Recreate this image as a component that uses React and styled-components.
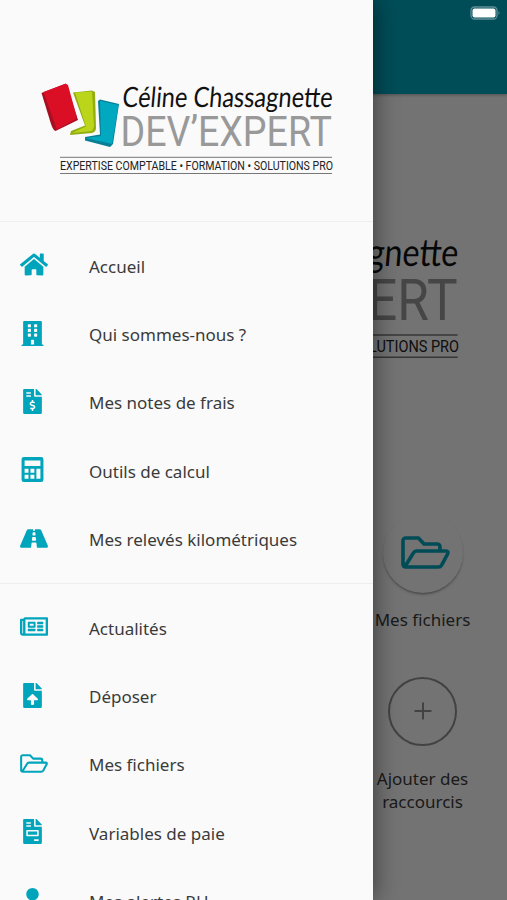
import styled, { createGlobalStyle } from 'styled-components';
import {
  FaHome,
  FaBuilding,
  FaFileInvoiceDollar,
  FaRoad,
  FaRegNewspaper,
  FaFileUpload,
  FaFileInvoice,
  FaUser,
} from 'react-icons/fa';

const GlobalStyle = createGlobalStyle`
  * {
    box-sizing: border-box;
  }
  body {
    margin: 0;
    font-family: 'Noto Sans', 'Open Sans', sans-serif;
    color: #3a3a3a;
  }
`;

const Screen = styled.div`
  position: relative;
  width: 507px;
  height: 900px;
  overflow: hidden;
  background: #fafafa;
`;

const Header = styled.header`
  height: 94px;
  background: #00a9c0;
  box-shadow: 0 1px 3px rgba(0, 0, 0, 0.3);
`;

const Home = styled.main`
  display: flex;
  flex-direction: column;
`;

const HomeLogo = styled.div`
  display: flex;
  padding: 138px 0 0 58px;
`;

const Shortcuts = styled.div`
  display: grid;
  grid-template-columns: repeat(3, 1fr);
  padding-top: 152px;
`;

const Shortcut = styled.div`
  grid-column: 3;
  display: flex;
  flex-direction: column;
  align-items: center;
  height: 159px;
`;

const Bubble = styled.div`
  display: flex;
  align-items: center;
  justify-content: center;
  width: 80px;
  height: 80px;
  border-radius: 50%;
  color: #00a5bb;
  background: #fafafa;
  box-shadow: 0 2px 3px -1px rgba(0, 0, 0, 0.5);

  svg {
    flex: none;
  }
`;

const FolderBubble = styled(Bubble)`
  padding-left: 5px;
`;

const AddBubble = styled(Bubble)`
  width: 69px;
  height: 69px;
  margin: 5px 0 6px;
  color: #919191;
  background: none;
  border: 2.5px solid #919191;
  box-shadow: none;
`;

const ShortcutLabel = styled.div`
  width: 110px;
  margin-top: 15px;
  font-size: 17px;
  line-height: 23px;
  text-align: center;
`;

const Backdrop = styled.div`
  position: absolute;
  inset: 0;
  background: rgba(0, 0, 0, 0.54);
`;

const Battery = styled.svg`
  position: absolute;
  top: 6px;
  right: 6px;
`;

const Drawer = styled.nav`
  position: absolute;
  top: 0;
  left: 0;
  width: 372.5px;
  height: 900px;
  overflow: hidden;
  background: #fafafa;
  box-shadow: 2px 0 22px rgba(0, 0, 0, 0.45);
`;

const DrawerHead = styled.div`
  height: 222px;
  padding: 82px 0 0 40px;
  border-bottom: 1px solid #eeeeee;
`;

const Section = styled.ul`
  margin: 0;
  padding: 10px 0 9px;
  list-style: none;
  border-bottom: 1px solid #eeeeee;
`;

const Item = styled.li`
  display: flex;
  align-items: center;
  height: 68.4px;
  padding-left: 20.3px;
  font-size: 17px;
`;

const ItemIcon = styled.span`
  display: flex;
  align-items: center;
  justify-content: ${({ $wide }) => ($wide ? 'flex-start' : 'center')};
  width: 24px;
  height: 25px;
  margin: 0 44.7px 3px 0;
  font-size: 25px;
  color: #00a5bb;

  svg {
    flex: none;
    width: ${({ $wide }) => ($wide ? '28px' : '25px')};
    height: 25px;
  }
`;

const Calculator = () => (
  <svg viewBox="0 0 448 512" fill="currentColor">
    <path
      fillRule="evenodd"
      d="M48 0h352q48 0 48 48v416q0 48-48 48H48q-48 0-48-48V48Q0 0 48 0zM62 72v112h324V72zM62 242v80h80v-80zM182 242v80h80v-80zM62 366v80h80v-80zM182 366v80h80v-80zM304 242v204h82V242z"
    />
  </svg>
);

const FolderOpen = ({ width }) => (
  <svg
    width={width}
    viewBox="0 0 49 33"
    fill="none"
    stroke="currentColor"
    strokeWidth="3.6"
    strokeLinecap="round"
    strokeLinejoin="round"
  >
    <path d="M39 14.500V11Q39 8 36 8H23L17.500 2H5Q2 2 2 5V28Q2 31 5 31H37.500Q39.500 31 40.500 29.300L46.600 18Q47.800 15 45 15H15.500Q13.500 15 12.500 16.800L4 30.500" />
  </svg>
);

const Logo = ({ width }) => (
  <svg width={width} viewBox="0 0 293 94" style={{ display: 'block' }}>
    <path d="M1.500 11L26 1.500 38 38 15.500 49Q13 48 11 42z" fill="#a80f22" transform="translate(0 0)" />
    <path d="M3.500 10L25.500 1.800 28 3 36.500 34 36 37 17 47.500z" fill="#da0f25" />
    <path d="M33 10.500L52 8.500 55 10 56 46Q56 50 52 51L30 53 31 49 45 43.500z" fill="#93ad12" />
    <path d="M35 10.500L52 9.500 54 44.500 52 49 32 51 46 44.500z" fill="#bbd51b" />
    <path d="M58 19L60 17.500 79 22 73 62 70 65 45 58.500 45 55 60 52.500z" fill="#087f95" />
    <path d="M60 19L78.500 23 72 62 46 56 61 54z" fill="#00a9c0" />
    <text
      x="84"
      y="24.500"
      textLength="210"
      lengthAdjust="spacingAndGlyphs"
      fontFamily="Lato"
      fontSize="28"
      fill="#111"
      transform="skewX(-5)"
    >
      Céline Chassagnette
    </text>
    <text
      x="80.500"
      y="64.300"
      textLength="211.500"
      lengthAdjust="spacingAndGlyphs"
      fontFamily="Roboto"
      fontSize="42.500"
      fill="#999"
    >
      DEV’EXPERT
    </text>
    <path d="M20 75.300H292M20 91.500H292" stroke="#777" />
    <text
      x="20"
      y="87.600"
      textLength="273"
      lengthAdjust="spacingAndGlyphs"
      fontFamily="Roboto"
      fontSize="12.300"
      fill="#222"
    >
      EXPERTISE COMPTABLE • FORMATION • SOLUTIONS PRO
    </text>
  </svg>
);

const mainLinks = [
  { label: 'Accueil', icon: FaHome, wide: true },
  { label: 'Qui sommes-nous ?', icon: FaBuilding },
  { label: 'Mes notes de frais', icon: FaFileInvoiceDollar },
  { label: 'Outils de calcul', icon: Calculator },
  { label: 'Mes relevés kilométriques', icon: FaRoad, wide: true },
];

const fileLinks = [
  { label: 'Actualités', icon: FaRegNewspaper, wide: true },
  { label: 'Déposer', icon: FaFileUpload },
  { label: 'Mes fichiers', icon: FolderOpen, wide: true },
  { label: 'Variables de paie', icon: FaFileInvoice },
  { label: 'Mes alertes RH', icon: FaUser },
];

const Links = ({ links }) => (
  <Section>
    {links.map(({ label, icon: Icon, wide }) => (
      <Item key={label}>
        <ItemIcon $wide={wide}>
          <Icon />
        </ItemIcon>
        {label}
      </Item>
    ))}
  </Section>
);

const App = () => {
  return (
    <>
      <GlobalStyle />
      <Screen>
        <Header />
        <Home>
          <HomeLogo>
            <Logo width={401} />
          </HomeLogo>
          <Shortcuts>
            <Shortcut>
              <FolderBubble>
                <FolderOpen width={49} />
              </FolderBubble>
              <ShortcutLabel>Mes fichiers</ShortcutLabel>
            </Shortcut>
            <Shortcut>
              <AddBubble>
                <svg width="18" height="18" stroke="currentColor" strokeWidth="2">
                  <path d="M9 0.500V17.500M0.500 9H17.500" />
                </svg>
              </AddBubble>
              <ShortcutLabel>Ajouter des raccourcis</ShortcutLabel>
            </Shortcut>
          </Shortcuts>
        </Home>
        <Backdrop />
        <Battery width="31" height="15" viewBox="0 0 31 15">
          <rect x="1" y="1" width="26" height="12" rx="3.500" fill="none" stroke="#5f8f98" strokeWidth="1.300" />
          <rect x="2.500" y="2.500" width="23" height="9" rx="2" fill="#fff" />
          <path d="M28.500 5Q30.500 7 28.500 9z" fill="#5f8f98" />
        </Battery>
        <Drawer>
          <DrawerHead>
            <Logo width={293} />
          </DrawerHead>
          <Links links={mainLinks} />
          <Links links={fileLinks} />
        </Drawer>
      </Screen>
    </>
  );
};

export default App;
